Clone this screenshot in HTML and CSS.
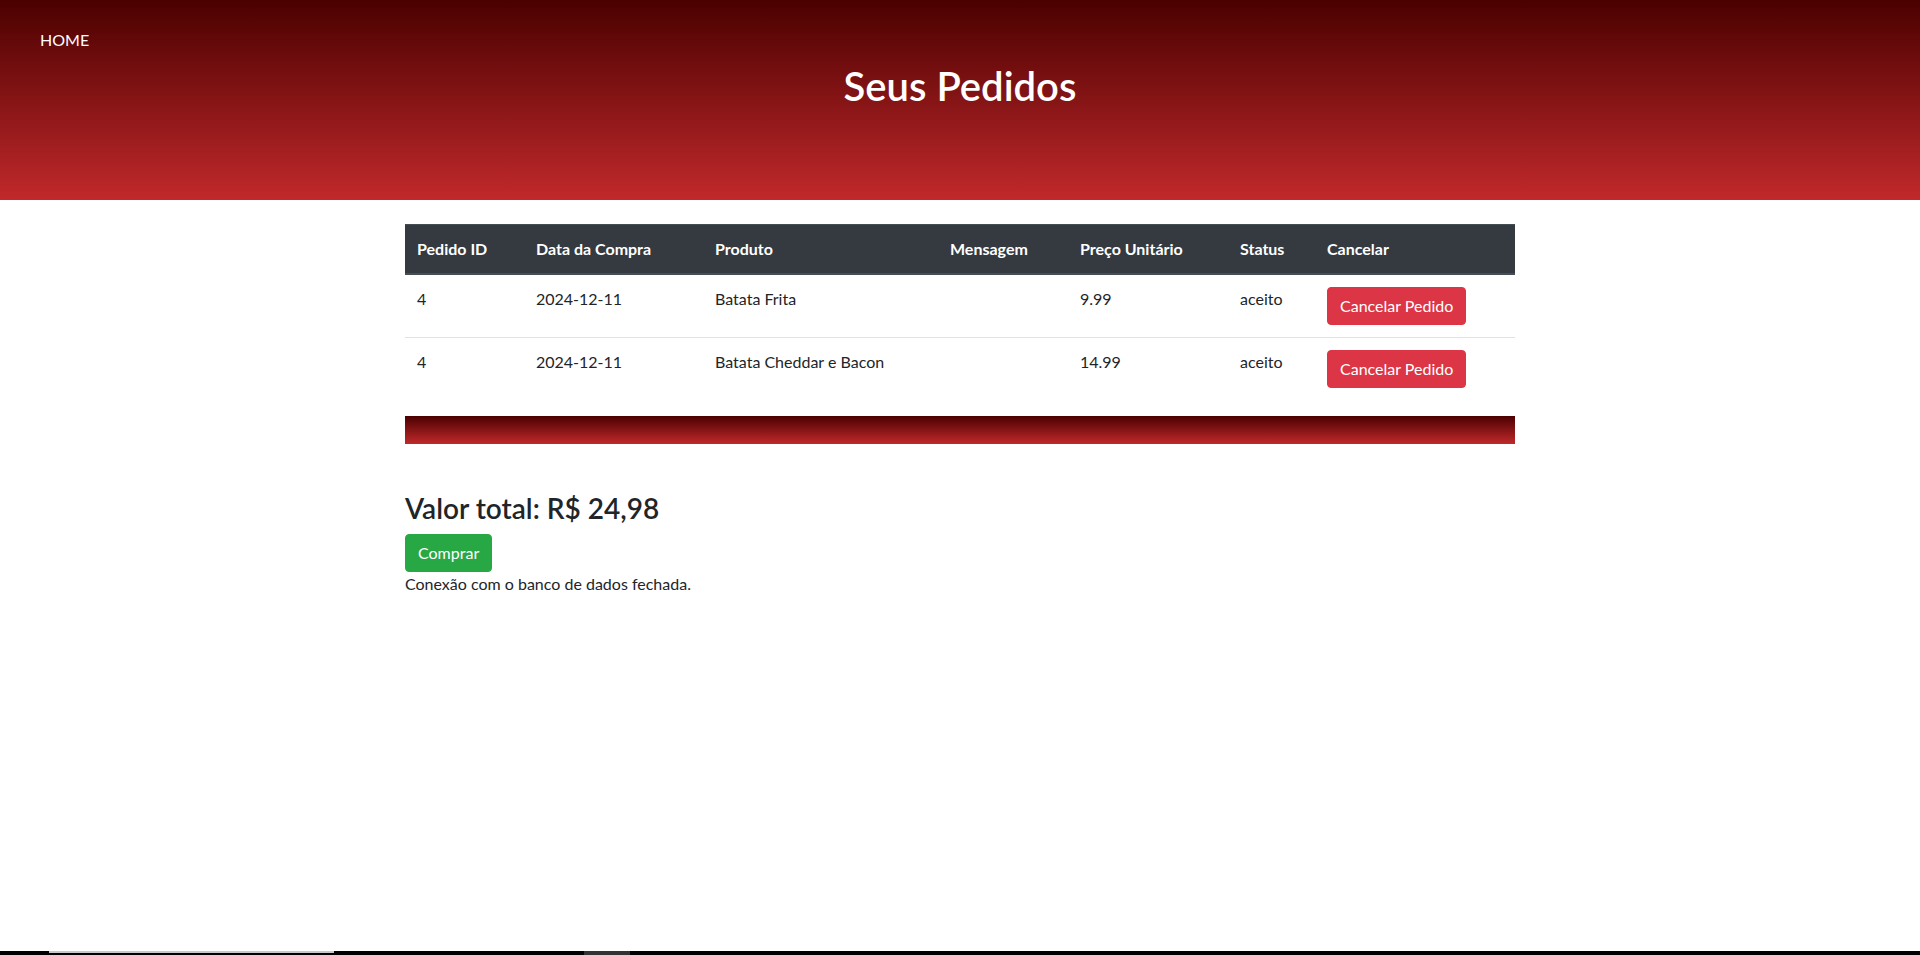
FILE: index.html
```html
<!DOCTYPE html>
<html lang="pt-BR">
<head>
<meta charset="utf-8">
<title>Seus Pedidos</title>
<link rel="stylesheet" href="styles.css">
</head>
<body>
<div class="page">
  <header class="hero">
    <nav class="nav"><a class="nav-link" href="#">HOME</a></nav>
    <h1 class="hero-title">Seus Pedidos</h1>
  </header>
  <main class="container">
    <table class="orders">
      <colgroup>
        <col class="c1"><col class="c2"><col class="c3"><col class="c4"><col class="c5"><col class="c6"><col class="c7">
      </colgroup>
      <thead>
        <tr>
          <th>Pedido ID</th><th>Data da Compra</th><th>Produto</th><th>Mensagem</th><th>Preço Unitário</th><th>Status</th><th>Cancelar</th>
        </tr>
      </thead>
      <tbody>
        <tr>
          <td>4</td><td>2024-12-11</td><td>Batata Frita</td><td></td><td>9.99</td><td>aceito</td>
          <td><button class="btn btn-danger">Cancelar Pedido</button></td>
        </tr>
        <tr>
          <td>4</td><td>2024-12-11</td><td>Batata Cheddar e Bacon</td><td></td><td>14.99</td><td>aceito</td>
          <td><button class="btn btn-danger">Cancelar Pedido</button></td>
        </tr>
      </tbody>
    </table>
    <div class="divider"></div>
    <h3 class="total">Valor total: R$ 24,98</h3>
    <button class="btn btn-success">Comprar</button>
    <p class="status-msg">Conexão com o banco de dados fechada.</p>
  </main>
  <div class="taskbar"><span class="tb-seg tb-a"></span><span class="tb-seg tb-b"></span></div>
</div>
</body>
</html>
```
FILE: styles.css
```css
* { box-sizing: border-box; }
html, body { margin: 0; padding: 0; }
body {
  font-family: Lato, "Open Sans", sans-serif;
  font-size: 16px;
  line-height: 1.5;
  color: #212529;
  background: #fff;
}
.page {
  min-height: 100vh;
  display: flex;
  flex-direction: column;
}
.hero {
  height: 200px;
  padding: 28px 40px 0;
  background: linear-gradient(to bottom, #4b0000 0%, #c1292b 100%);
  color: #fff;
}
.nav { height: 24px; }
.nav-link {
  color: #fff;
  text-decoration: none;
  font-size: 16px;
  line-height: 24px;
}
.hero-title {
  margin: 10px 0 0;
  text-align: center;
  font-size: 40px;
  font-weight: 600;
  line-height: 48px;
}
.container {
  width: 1110px;
  margin: 24px auto 0;
}
.orders {
  width: 100%;
  border-collapse: collapse;
  table-layout: fixed;
  margin-bottom: 16px;
}
.c1 { width: 119px; }
.c2 { width: 179px; }
.c3 { width: 235px; }
.c4 { width: 130px; }
.c5 { width: 160px; }
.c6 { width: 87px; }
.c7 { width: 200px; }
.orders th {
  background: #343a40;
  color: #fff;
  font-weight: 700;
  text-align: left;
  padding: 12px;
  border-top: 1px solid #454d55;
  border-bottom: 2px solid #454d55;
  line-height: 24px;
}
.orders td {
  padding: 12px;
  vertical-align: top;
  border-top: 1px solid #dee2e6;
  line-height: 24px;
}
.orders tbody tr:first-child td { border-top: 0; }
.btn {
  display: inline-block;
  font-family: inherit;
  font-size: 16px;
  line-height: 24px;
  padding: 6px 12px;
  border: 1px solid transparent;
  border-radius: 4px;
  color: #fff;
  cursor: pointer;
}
.btn-danger { background: #dc3545; border-color: #dc3545; }
.btn-success { background: #28a745; border-color: #28a745; }
.divider {
  height: 28px;
  background: linear-gradient(to bottom, #4b0000 0%, #c1292b 100%);
  margin-bottom: 48px;
}
.total {
  margin: 0 0 8px;
  font-size: 28px;
  font-weight: 600;
  line-height: 1.2;
}
.status-msg { margin: 0; }
.taskbar {
  margin-top: auto;
  height: 4px;
  background: #000;
  position: relative;
}
.tb-seg { position: absolute; top: 0; height: 2px; }
.tb-a { left: 49px; width: 285px; background: #c8c8c8; }
.tb-b { left: 584px; width: 46px; background: #333; height: 4px; }
```
